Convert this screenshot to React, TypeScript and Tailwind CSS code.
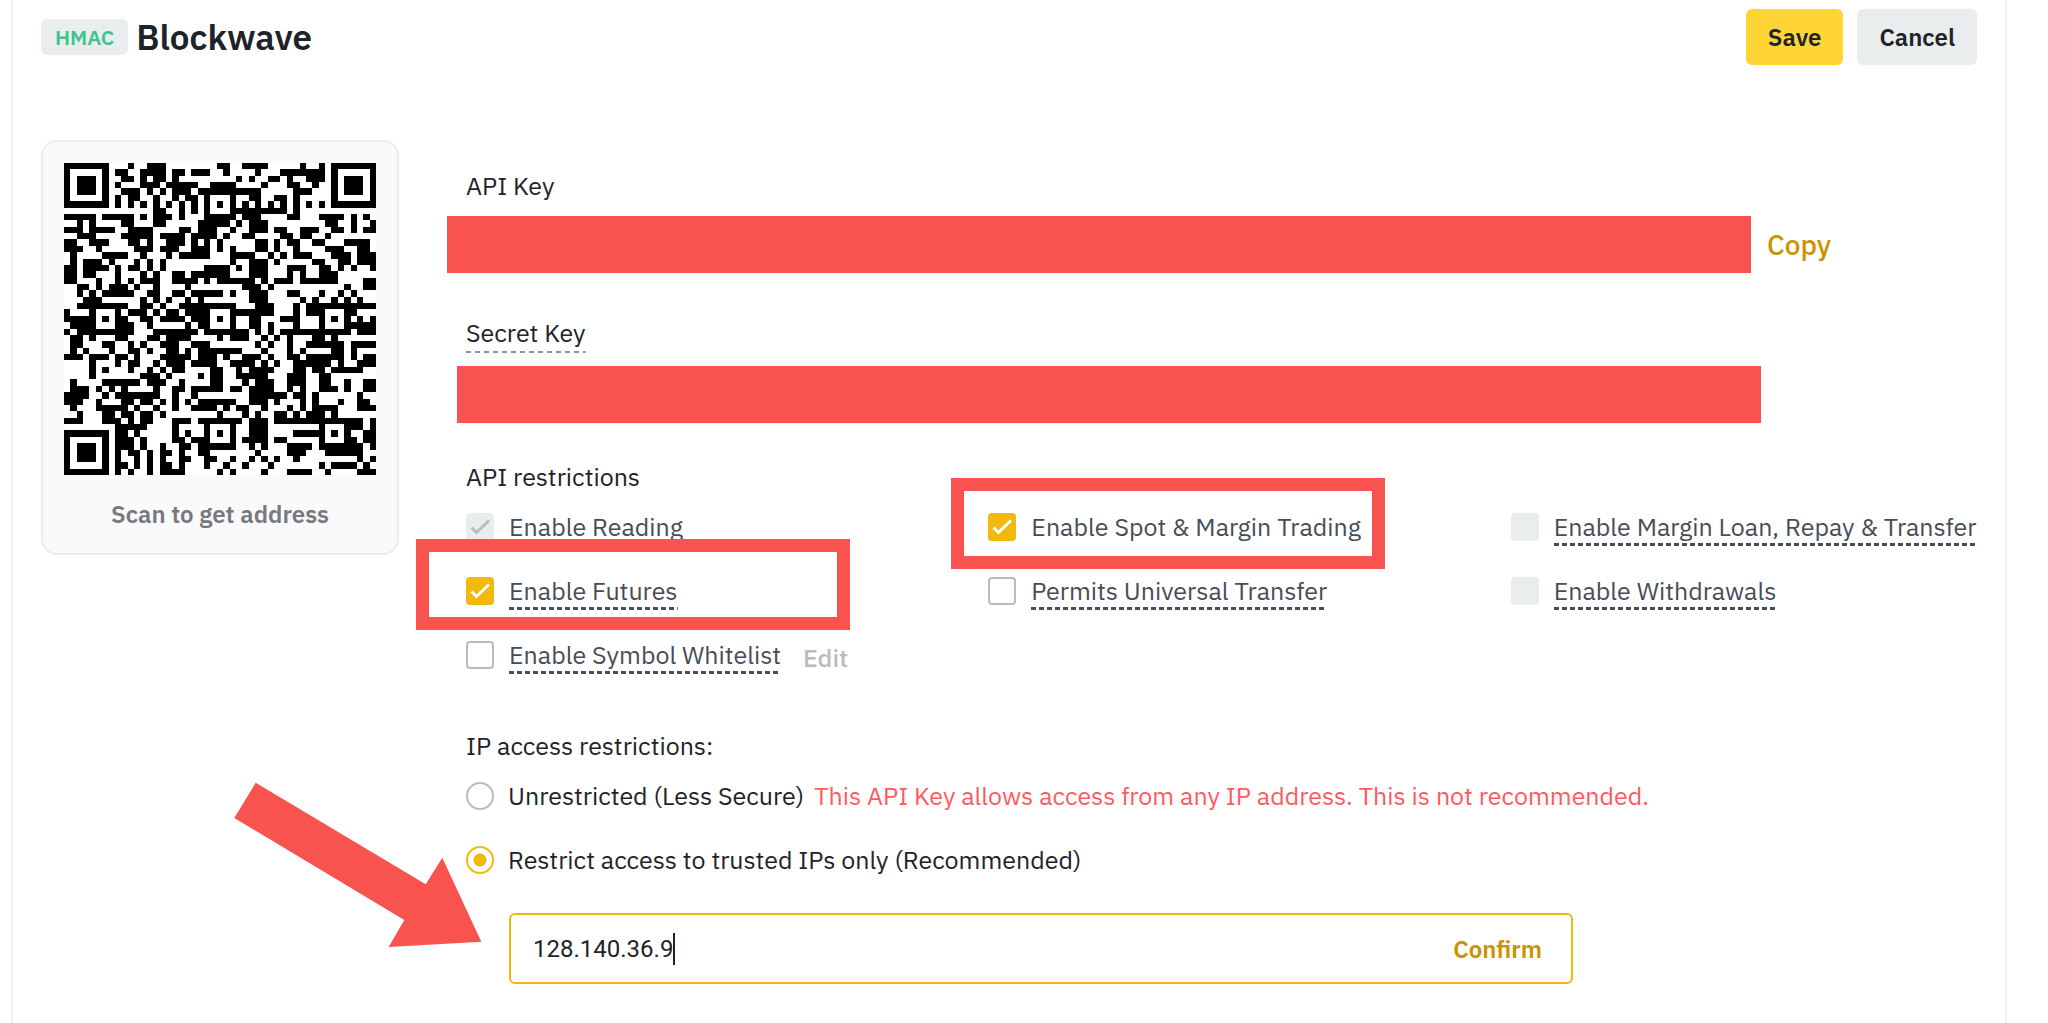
import React, { useState } from "react";

// Dark modules of each row, as "start-end" column runs
const QR_ROWS = [
  "10 13-15 24-25 28-31 37 40",
  "8-9 12-15 17-18 20-22 25 30 34-40",
  "9-10 12 14-15 17 27 29 32-33 35 38-40",
  "8 12-14 16-20 23-26 31 35-36 39",
  "9-11 13 15 17-19 21-30 36-38",
  "8 10-11 14 17 19-20 22 26 29-30 33-34 36",
  "8 10 12 14 16 18 20 22 24 26 28 30 32 34 36 38 40",
  "14-15 18 20 22 26-31 32-34 36",
  "0-4 6-10 12 14-16 18 22-26 28-30 35-36 40-42 43 45 47",
  "2 4 9-10 14-15 21-25 27 29-31 41-42 45 48",
  "0-2 4-7 10-13 18-19 21-23 26 29-31 33-34 37-39 42-43 45 47-48",
  "2-4 9-13 15-18 20-23 25 28-29 34-35 37-38 41",
  "0-1 4-6 10-11 13 16-18 20 22 24 30-31 33 35-36 39-40 44-47",
  "0-2 5 11-13 15-17 20-22 24 26 30-31 33 36 41-43 46-47",
  "1 6-9 12 16 18-22 26-29 32 34 36-38 42-44 46-48",
  "1 3-5 7 11 13 15 26 29-31 33 39-40 43-44 46-48",
  "0-1 3-6 8 10-11 13 15 22-25 27 29-31 35-37 40-41 43 45 48",
  "0-1 3-4 8 12 14 17-18 20-25 29-31 35 37 40-42",
  "0-1 5 8 10 12-14 17-20 22 24-29 31 33-35 37-42 47-48",
  "2-3 5 7-9 11 14 19 28-30 32 44 47-48",
  "2 4 6-10 13-14 17-18 20-24 26 29-31 35-36 40 43 45",
  "3-5 12 14 16 19 21 29-31 37 39 42 44 46",
  "2-9 12-13 15 18-26 30-32 36 38-48",
  "0 4 8 10-12 14 16-17 19-22 26-32 36 38-40 44-45",
  "0-4 6 8-9 12-13 15-18 20-22 24 26 29-30 34-36 40 42 44 46 48",
  "1-4 8-10 13 19 21-22 26 29-30 32 36 40 44-48",
  "0 2-10 14-20 22-28 30 32 34-44 46-48",
  "1-2 4 8-9 13-14 16-19 24 26-28 31 33 35 39-40 42",
  "1-2 6-7 10 12 15-17 20-22 30 32 35 38-43 45-48",
  "1 3 7 10-11 13 16-17 19 21-27 31 35 37 42-43 45",
  "0-2 4-6 8-9 11 15-19 21-23 25 28-30 32 35-36 38-43 45 47-48",
  "4 8 10-11 14 16-18 20-23 26-29 31 33 36-41 43 46-48",
  "4 6 10 13 15 17-18 23-24 27 29-32 36-37 39-40 42-46",
  "4 12-14 16 21 23-24 27-31 35-37 40-41",
  "1 6-11 13-15 18 23-24 28 30-32 35-37 40-41 44 47-48",
  "1-3 5 7 9 14 17-18 20-24 26-27 29-32 35 37 40-42 44 47-48",
  "0-3 6 8-14 17 20 29-34 36-37 39 46",
  "0-2 5 9-10 12-13 15 17 19 21-26 29-31 33 37 39 43 46-47",
  "1 5-9 11 14 17 20-23 25 27-28 31 35 37 39-42 46-48",
  "2 6-7 9-10 12-13 15 24 28 30 33-34 36 38-40 42",
  "0-2 6-8 10 12-13 17-19 21-27 29-31 33-46 48",
  "8-12 17 22 26 29-31 40 44-46 48",
  "8-9 11 17 19 22 24 26 29-31 36-40 42 44 47-48",
  "8-10 12 17-18 20-22 26 28-31 33-34 40 44-45 47-48",
  "8-10 12 15 18-19 21-26 29 31 35-38 40-46 48",
  "8 10-11 13 15-16 18 21-22 30 35-37 41-46",
  "8 11 13 15 18-19 22 23 26 29 31 33 36 46 48",
  "8-9 11 13 15-16 18 22 25 28 32 40 42-43 44-45 47",
  "8 10 13 15-18 24 26 31 35-38 41 46-48",
];

const QR_PATH = QR_ROWS.map((row, y) =>
  row
    .split(" ")
    .map((run) => {
      const [start, end = start] = run.split("-").map(Number);
      return `M${start} ${y}h${end - start + 1}v1H${start}z`;
    })
    .join("")
).join("");

const QrCode = () => (
  <svg
    viewBox="0 0 49 49"
    className="w-full bg-white"
    shapeRendering="crispEdges"
    role="img"
    aria-label="QR code"
  >
    <path d={QR_PATH} />
    {[
      [0, 0],
      [42, 0],
      [0, 42],
    ].map(([x, y]) => (
      <g key={`${x}-${y}`}>
        <rect x={x} y={y} width="7" height="7" />
        <rect x={x + 1} y={y + 1} width="5" height="5" fill="#fff" />
        <rect x={x + 2} y={y + 2} width="3" height="3" />
      </g>
    ))}
    {[
      [24, 6],
      [6, 24],
      [24, 24],
      [42, 24],
      [24, 42],
      [42, 42],
    ].map(([x, y]) => (
      <g key={`${x}-${y}`}>
        <rect x={x - 2} y={y - 2} width="5" height="5" />
        <rect x={x - 1} y={y - 1} width="3" height="3" fill="#fff" />
        <rect x={x} y={y} width="1" height="1" />
      </g>
    ))}
  </svg>
);

const Highlight = ({ className }: { className: string }) => (
  <span
    className={`pointer-events-none absolute z-10 h-[91px] w-[434px] border-[13px] border-[#f9534f] ${className}`}
  />
);

type PermissionProps = {
  label: string;
  defaultChecked?: boolean;
  disabled?: boolean;
  underline?: boolean;
  children?: React.ReactNode;
};

const Permission = ({
  label,
  defaultChecked = false,
  disabled = false,
  underline = true,
  children,
}: PermissionProps) => (
  <div className="relative flex h-16 items-center">
    <label className="flex items-center gap-[15px] whitespace-nowrap text-[#474d57]">
      <span className="relative flex size-7 shrink-0">
        <input
          type="checkbox"
          defaultChecked={defaultChecked}
          disabled={disabled}
          className="peer size-7 appearance-none rounded border-2 border-[#b9bbbe] bg-white checked:border-[#f0b90b] checked:bg-[#f0b90b] disabled:border-[#eaedee] disabled:bg-[#eaedee]"
        />
        <svg
          viewBox="0 0 28 28"
          fill="none"
          strokeWidth="3"
          className="pointer-events-none absolute inset-0 hidden stroke-white peer-checked:block peer-disabled:stroke-[#b9bbbe]"
        >
          <path d="M5.5 14.5l5 5L23 7.5" />
        </svg>
      </span>
      <span
        className={
          underline
            ? "-mb-[3px] bg-[repeating-linear-gradient(90deg,#474d57_0_5px,transparent_5px_8px)] bg-[length:100%_3px] bg-bottom bg-no-repeat pb-[3px]"
            : ""
        }
      >
        {label}
      </span>
    </label>
    {children}
  </div>
);

type IpOptionProps = {
  label: string;
  checked: boolean;
  onSelect: () => void;
  warning?: string;
};

const IpOption = ({ label, checked, onSelect, warning }: IpOptionProps) => (
  <div className="flex h-16 items-center gap-2.5 whitespace-nowrap">
    <label className="flex items-center gap-3.5">
      <input
        type="radio"
        name="ip-access"
        checked={checked}
        onChange={onSelect}
        className="size-7 shrink-0 appearance-none rounded-full border-2 border-[#b9bbbe] bg-white checked:border-[#f0b90b] checked:bg-[radial-gradient(circle,#f0b90b_6px,transparent_7px)]"
      />
      {label}
    </label>
    {warning && <span className="text-[#ff5a5f]">{warning}</span>}
  </div>
);

const App = () => {
  const [restricted, setRestricted] = useState(true);
  const [ip, setIp] = useState("128.140.36.9");

  return (
    <div className="min-h-screen overflow-hidden bg-white pr-[41px] pl-[11px] font-['IBM_Plex_Sans',Roboto,sans-serif] text-[25px] leading-8 text-[#1e2329]">
      <main className="min-h-screen border-x-2 border-[#eeeff0] px-7 pt-[9px] pb-10">
        <header className="flex items-center justify-between">
          <div className="flex items-center gap-2">
            <span className="rounded-md bg-[#eaedee] px-3.5 py-0.5 text-[21px] font-semibold text-[#3dc58d]">
              HMAC
            </span>
            <h1 className="text-[35px] leading-10 font-semibold">Blockwave</h1>
          </div>
          <div className="flex gap-3.5 text-[24px] font-semibold">
            <button
              type="button"
              className="h-14 rounded-md bg-[#fed535] px-[22px]"
            >
              Save
            </button>
            <button
              type="button"
              className="h-14 rounded-md bg-[#eaedee] px-[22px]"
            >
              Cancel
            </button>
          </div>
        </header>

        <div className="mt-[75px] flex items-start gap-[67px]">
          <aside className="w-[358px] shrink-0 rounded-2xl border-2 border-[#eaedee] bg-[#fafafa] px-[21px] pt-[21px] pb-[23px]">
            <QrCode />
            <p className="mt-[23px] text-center text-[24px] font-semibold text-[#76797f]">
              Scan to get address
            </p>
          </aside>

          <div className="min-w-0 flex-1 pt-[30px]">
            <h2>API Key</h2>
            <div className="mt-3.5 -ml-[19px] flex items-center gap-4">
              <div className="h-[57px] w-full max-w-[1304px] bg-[#f9534f]" />
              <button type="button" className="text-[28px] font-medium text-[#c99400]">
                Copy
              </button>
            </div>

            <h2 className="mt-11">
              <span className="inline-block bg-[repeating-linear-gradient(90deg,#929397_0_5px,transparent_5px_9px)] bg-[length:100%_2px] bg-bottom bg-no-repeat pb-1">
                Secret Key
              </span>
            </h2>
            <div className="mt-[13px] -ml-[9px]">
              <div className="h-[57px] w-full max-w-[1304px] bg-[#f9534f]" />
            </div>

            <h2 className="mt-[38px]">API restrictions</h2>
            <div className="mt-0.5 grid grid-cols-3 gap-x-14">
              <Permission label="Enable Reading" defaultChecked disabled underline={false} />
              <Permission
                label="Enable Spot & Margin Trading"
                defaultChecked
                underline={false}
              >
                <Highlight className="-top-[17px] -left-[37px]" />
              </Permission>
              <Permission label="Enable Margin Loan, Repay & Transfer" disabled />
              <Permission label="Enable Futures" defaultChecked>
                <Highlight className="-top-5 -left-[50px]" />
              </Permission>
              <Permission label="Permits Universal Transfer" />
              <Permission label="Enable Withdrawals" disabled />
              <Permission label="Enable Symbol Whitelist">
                <button
                  type="button"
                  disabled
                  className="mt-1.5 ml-[22px] font-medium text-[#b9bbbe]"
                >
                  Edit
                </button>
              </Permission>
            </div>

            <h2 className="mt-[43px]">IP access restrictions:</h2>
            <div className="mt-0.5">
              <IpOption
                label="Unrestricted (Less Secure)"
                checked={!restricted}
                onSelect={() => setRestricted(false)}
                warning="This API Key allows access from any IP address. This is not recommended."
              />
              <IpOption
                label="Restrict access to trusted IPs only (Recommended)"
                checked={restricted}
                onSelect={() => setRestricted(true)}
              />
            </div>

            <div className="relative mt-[21px] ml-[43px] flex h-[71px] max-w-[1064px] items-center rounded-md border-2 border-[#f0b90b] pr-[29px] pl-[22px]">
              <svg
                viewBox="0 0 248 165"
                className="pointer-events-none absolute -top-[133px] -left-[277px] h-[165px] w-[248px]"
                fill="#f9534f"
              >
                <path d="M21.7 .7L191.7 102.3L208.3 75.7L247.3 159.7L154.7 165L170.3 138L.3 36z" />
              </svg>
              <input
                type="text"
                value={ip}
                onChange={(e) => setIp(e.target.value)}
                aria-label="Trusted IP address"
                className="field-sizing-content font-[Roboto,sans-serif] text-[24px] caret-transparent outline-none"
              />
              <span className="h-8 w-0.5 bg-[#1e2329]" />
              <button
                type="button"
                className="ml-auto text-[24px] font-semibold text-[#c99400]"
              >
                Confirm
              </button>
            </div>
          </div>
        </div>
      </main>
    </div>
  );
};

export default App;
